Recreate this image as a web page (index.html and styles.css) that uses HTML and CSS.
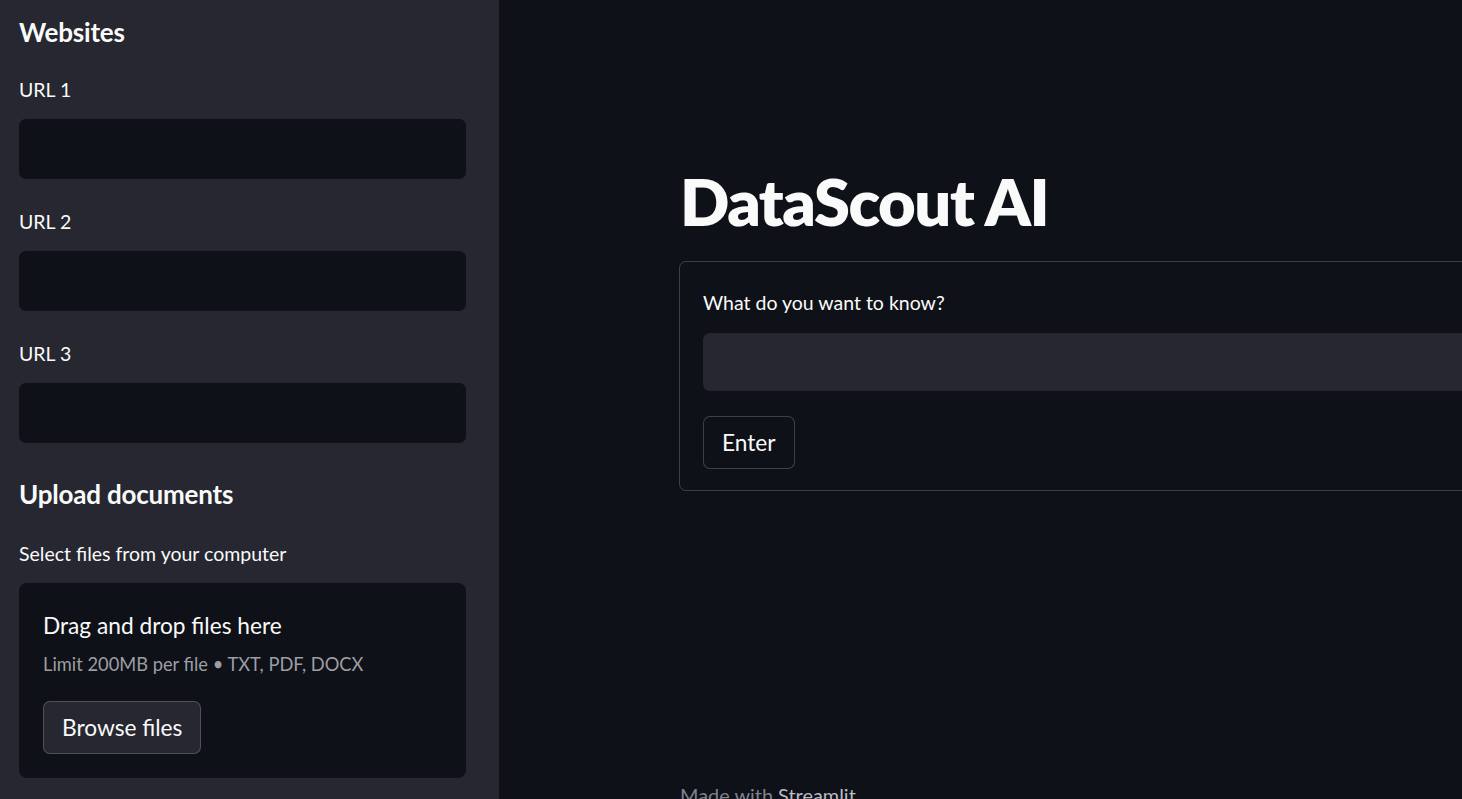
FILE: index.html
```html
<!DOCTYPE html>
<html lang="en">
<head>
  <meta charset="UTF-8">
  <meta name="viewport" content="width=device-width, initial-scale=1.0">
  <title>DataScout AI</title>
  <link rel="stylesheet" href="styles.css">
</head>
<body>
  <div class="app">
    <aside class="sidebar">
      <h2 class="side-title">Websites</h2>
      <div class="field">
        <label class="field-label">URL 1</label>
        <input class="side-input" type="text">
      </div>
      <div class="field">
        <label class="field-label">URL 2</label>
        <input class="side-input" type="text">
      </div>
      <div class="field">
        <label class="field-label">URL 3</label>
        <input class="side-input" type="text">
      </div>

      <h2 class="side-title upload-title">Upload documents</h2>
      <div class="field">
        <label class="field-label">Select files from your computer</label>
        <div class="dropzone">
          <div class="drop-text">Drag and drop files here</div>
          <div class="drop-hint">Limit 200MB per file • TXT, PDF, DOCX</div>
          <button class="btn btn-browse">Browse files</button>
        </div>
      </div>
    </aside>

    <main class="main">
      <div class="block">
        <h1 class="page-title">DataScout AI</h1>
        <form class="query-form">
          <label class="field-label">What do you want to know?</label>
          <input class="main-input" type="text">
          <button class="btn btn-enter" type="button">Enter</button>
        </form>
      </div>
      <footer class="footer">Made with <a href="#">Streamlit</a></footer>
    </main>
  </div>
</body>
</html>
```

FILE: styles.css
```css
html, body {
  margin: 0;
  height: 100%;
  overflow: hidden;
}
body {
  font-family: Lato, "Noto Sans", sans-serif;
  background-color: #0e1117;
  color: #fafafa;
}
.app {
  display: flex;
  height: 799px;
}

/* Barre latérale */
.sidebar {
  width: 499px;
  flex-shrink: 0;
  box-sizing: border-box;
  background-color: #262730;
  padding: 18px 33px 0 19px;
  display: flex;
  flex-direction: column;
}
.side-title {
  margin: 0;
  font-size: 26px;
  line-height: 29px;
  font-weight: 700;
  letter-spacing: -0.2px;
}
.field {
  display: flex;
  flex-direction: column;
  margin-top: 31px;
}
.field + .field {
  margin-top: 31px;
}
.field-label {
  font-size: 19.5px;
  line-height: 24px;
  margin-bottom: 17px;
}
.side-input {
  height: 60px;
  box-sizing: border-box;
  border: none;
  border-radius: 7px;
  background-color: #0e1117;
  outline: none;
}
.upload-title {
  margin-top: 37px;
}
.upload-title + .field {
  margin-top: 33px;
}
.dropzone {
  background-color: #0e1117;
  border-radius: 8px;
  padding: 30px 24px 24px;
  display: flex;
  flex-direction: column;
  align-items: flex-start;
}
.drop-text {
  font-size: 22.7px;
  line-height: 26px;
}
.drop-hint {
  font-size: 18.3px;
  line-height: 24px;
  margin-top: 13px;
  color: #9d9ea3;
}

/* Boutons */
.btn {
  font-family: inherit;
  font-size: 22.7px;
  color: #fafafa;
  border: 1px solid rgba(250, 250, 250, 0.2);
  border-radius: 7px;
  height: 53px;
  padding: 0 18px;
  cursor: pointer;
}
.btn-browse {
  margin-top: 25px;
  background-color: #262730;
}
.btn-enter {
  margin-top: 25px;
  background-color: #0e1117;
}

/* Zone principale */
.main {
  flex: 1;
  min-width: 0;
  padding-left: 180px;
  display: flex;
  flex-direction: column;
  overflow: hidden;
}
.block {
  width: 1000px;
  flex: 1;
}
.page-title {
  margin: 162px 0 0 1px;
  font-size: 65px;
  line-height: 78px;
  font-weight: 800;
  letter-spacing: -1.5px;
}
.query-form {
  margin-top: 21px;
  border: 1px solid rgba(250, 250, 250, 0.2);
  border-radius: 7px;
  padding: 29px 23px 21px;
  display: flex;
  flex-direction: column;
  align-items: flex-start;
}
.query-form .field-label {
  margin-bottom: 18px;
}
.main-input {
  align-self: stretch;
  height: 58px;
  box-sizing: border-box;
  border: none;
  border-radius: 7px;
  background-color: #262730;
  outline: none;
}
.footer {
  font-size: 19.9px;
  line-height: 24px;
  color: #7d8190;
  padding: 0 0 0 1px;
  margin-bottom: -8px;
}
.footer a {
  color: #b8bbc4;
  text-decoration: none;
}
```
